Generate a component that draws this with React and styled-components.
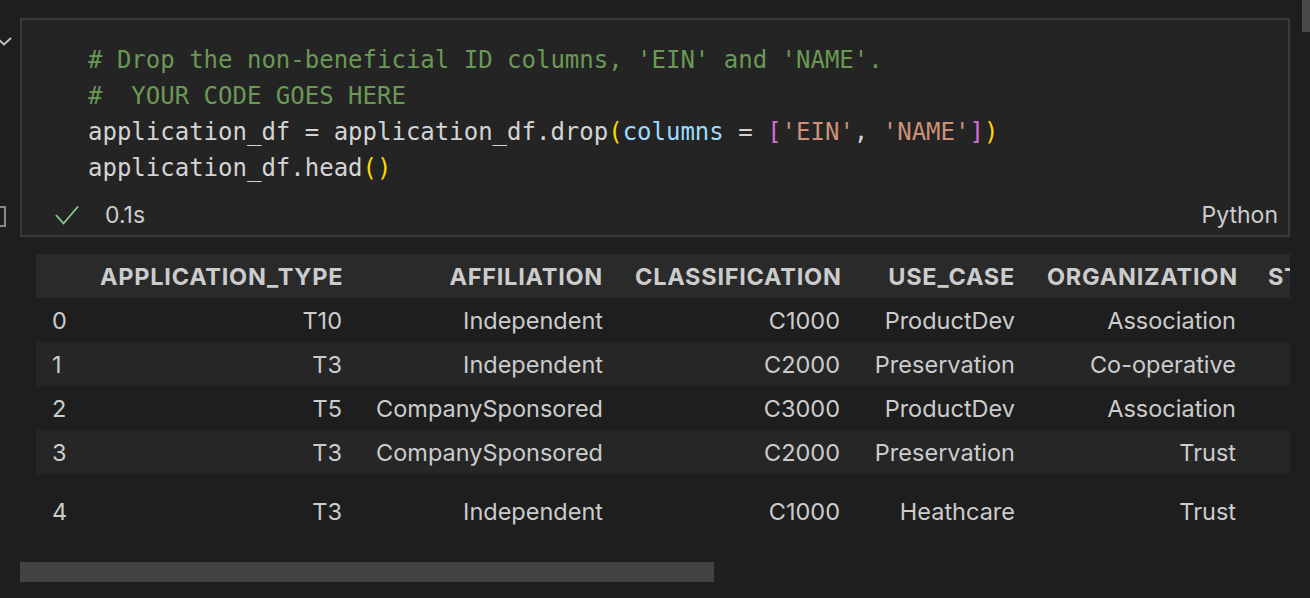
import React from "react";
import styled, { createGlobalStyle } from "styled-components";

const Global = createGlobalStyle`
  html, body { margin: 0; padding: 0; background: #1e1e1e; }
  body { width: 1310px; height: 598px; overflow: hidden; font-family: Inter, "Liberation Sans", sans-serif; }
  #root { width: 1310px; height: 598px; }
`;

const Page = styled.div`
  display: flex;
  width: 1310px;
  height: 598px;
  background: #1e1e1e;
  overflow: hidden;
`;

const Gutter = styled.div`
  width: 20px;
  flex: none;
  display: flex;
  flex-direction: column;
  padding-top: 36px;
  overflow: hidden;
`;

const GutterChevron = styled.svg`
  display: block;
  margin-left: -4px;
  width: 16px;
  height: 10px;
`;

const GutterBracket = styled.svg`
  display: block;
  margin-top: 160px;
  margin-left: -10px;
  width: 20px;
  height: 22px;
`;

const Main = styled.div`
  width: 1270px;
  flex: none;
  display: flex;
  flex-direction: column;
  padding-top: 18px;
`;

const RightRail = styled.div`
  width: 20px;
  flex: none;
  display: flex;
  justify-content: flex-end;
  align-items: flex-start;
`;

const VThumb = styled.div`
  width: 8px;
  height: 32px;
  background: #4a4a4a;
`;

const Cell = styled.div`
  border: 2px solid #3a3a3c;
  background: #242424;
  display: flex;
  flex-direction: column;
`;

const Code = styled.pre`
  margin: 0;
  padding: 22px 0 0 66px;
  font-family: "DejaVu Sans Mono", "Liberation Mono", monospace;
  font-size: 24px;
  line-height: 36px;
  color: #d4d4d4;
  white-space: pre;
`;

const Tok = styled.span`
  color: ${(p) => p.c};
`;

const Status = styled.div`
  display: flex;
  align-items: center;
  height: 30px;
  margin: 14px 0 5px;
  padding: 0 10px 0 33px;
  font-family: Inter, "Liberation Sans", sans-serif;
  font-size: 23px;
  color: #cccccc;
`;

const CheckIcon = styled.svg`
  width: 24px;
  height: 20px;
  flex: none;
`;

const Time = styled.span`
  margin-left: 26px;
`;

const Lang = styled.span`
  margin-left: auto;
`;

const Output = styled.div`
  margin-top: 17px;
  padding-left: 16px;
  overflow: hidden;
`;

const Table = styled.table`
  border-collapse: collapse;
  table-layout: fixed;
  width: 1560px;
  font-family: Inter, "Liberation Sans", sans-serif;
  font-size: 23.5px;
  color: #cccccc;
`;

const HeadRow = styled.tr`
  background: #2a2a2a;
  height: 44px;
`;

const Row = styled.tr`
  background: ${(p) => (p.odd ? "#262626" : "#1e1e1e")};
  height: ${(p) => (p.tall ? "74px" : "44px")};
`;

const Th = styled.th`
  padding: 0 16px;
  font-weight: 700;
  text-align: ${(p) => (p.left ? "left" : "right")};
  white-space: nowrap;
  overflow: hidden;
  letter-spacing: 0.75px;
`;

const Td = styled.td`
  padding: 0 16px;
  text-align: ${(p) => (p.left ? "left" : "right")};
  white-space: nowrap;
  overflow: hidden;
`;

const HScroll = styled.div`
  margin-top: 14px;
  width: 694px;
  height: 20px;
  background: #434343;
`;

const columns = [
  "APPLICATION_TYPE",
  "AFFILIATION",
  "CLASSIFICATION",
  "USE_CASE",
  "ORGANIZATION",
  "STATUS",
];
const widths = [48, 274, 261, 237, 175, 221, 344];

const rows = [
  ["T10", "Independent", "C1000", "ProductDev", "Association", "1"],
  ["T3", "Independent", "C2000", "Preservation", "Co-operative", "1"],
  ["T5", "CompanySponsored", "C3000", "ProductDev", "Association", "1"],
  ["T3", "CompanySponsored", "C2000", "Preservation", "Trust", "1"],
  ["T3", "Independent", "C1000", "Heathcare", "Trust", "1"],
];

export default function App() {
  return (
    <Page>
      <Global />
      <Gutter>
        <GutterChevron viewBox="0 0 16 10">
          <polyline points="1,2 8,8.5 15,2" fill="none" stroke="#c5c5c5" strokeWidth="1.8" />
        </GutterChevron>
        <GutterBracket viewBox="0 0 20 22">
          <rect x="1" y="1" width="14" height="19" fill="none" stroke="#8a8a8a" strokeWidth="2" />
        </GutterBracket>
      </Gutter>
      <Main>
        <Cell>
          <Code>
            <Tok c="#6a9955"># Drop the non-beneficial ID columns, 'EIN' and 'NAME'.</Tok>
            {"\n"}
            <Tok c="#6a9955">#  YOUR CODE GOES HERE</Tok>
            {"\n"}
            application_df = application_df.drop<Tok c="#ffd700">(</Tok>
            <Tok c="#9cdcfe">columns</Tok> = <Tok c="#da70d6">[</Tok>
            <Tok c="#ce9178">'EIN'</Tok>, <Tok c="#ce9178">'NAME'</Tok>
            <Tok c="#da70d6">]</Tok>
            <Tok c="#ffd700">)</Tok>
            {"\n"}
            application_df.head<Tok c="#ffd700">()</Tok>
          </Code>
          <Status>
            <CheckIcon viewBox="0 0 24 20">
              <polyline points="1,10 8.5,18.5 23,1.5" fill="none" stroke="#89d185" strokeWidth="1.8" />
            </CheckIcon>
            <Time>0.1s</Time>
            <Lang>Python</Lang>
          </Status>
        </Cell>
        <Output>
          <Table>
            <colgroup>
              {widths.map((w, i) => (
                <col key={i} style={{ width: w }} />
              ))}
            </colgroup>
            <thead>
              <HeadRow>
                <Th left></Th>
                {columns.map((c) => (
                  <Th key={c} left={c === "STATUS"}>{c}</Th>
                ))}
              </HeadRow>
            </thead>
            <tbody>
              {rows.map((r, i) => (
                <Row key={i} odd={i % 2 === 1} tall={i === rows.length - 1}>
                  <Td left>{i}</Td>
                  {r.map((v, j) => (
                    <Td key={j}>{v}</Td>
                  ))}
                </Row>
              ))}
            </tbody>
          </Table>
        </Output>
        <HScroll />
      </Main>
      <RightRail>
        <VThumb />
      </RightRail>
    </Page>
  );
}
